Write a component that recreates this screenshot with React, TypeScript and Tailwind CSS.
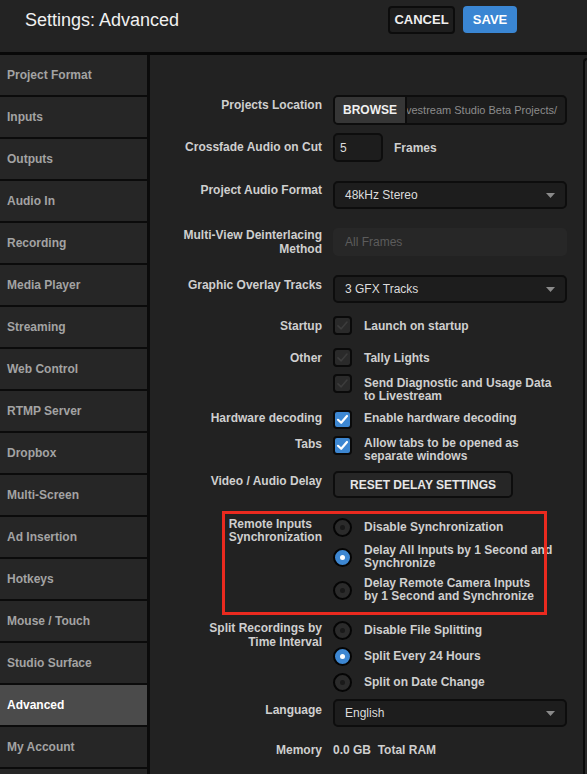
import type { ReactNode } from 'react'

const sidebarItems = [
  'Project Format',
  'Inputs',
  'Outputs',
  'Audio In',
  'Recording',
  'Media Player',
  'Streaming',
  'Web Control',
  'RTMP Server',
  'Dropbox',
  'Multi-Screen',
  'Ad Insertion',
  'Hotkeys',
  'Mouse / Touch',
  'Studio Surface',
  'Advanced',
  'My Account',
  'Support',
]

const font = { fontFamily: '"Liberation Sans", Arial, sans-serif' }

function Row({
  label,
  labelClass = '',
  className = '',
  children,
}: {
  label: ReactNode
  labelClass?: string
  className?: string
  children: ReactNode
}) {
  return (
    <div className={`flex items-start ${className}`}>
      <div className={`w-[172px] shrink-0 text-right text-[12px] font-bold leading-[14px] text-[#cfcfcf] ${labelClass}`}>
        {label}
      </div>
      <div className="ml-[11px] flex-1">{children}</div>
    </div>
  )
}

function Caret() {
  return (
    <svg width="9" height="5" viewBox="0 0 9 5" className="ml-auto mr-[10px]">
      <path d="M0 0 L9 0 L4.5 5 Z" fill="#8a8a8a" />
    </svg>
  )
}

function Select({ value }: { value: string }) {
  return (
    <div className="flex h-[28px] w-[234px] items-center rounded-[5px] border-2 border-[#0d0d0d] bg-[#1d1d1d] pl-[10px] text-[12px] text-[#dcdcdc]">
      {value}
      <Caret />
    </div>
  )
}

function Check({ checked }: { checked?: boolean }) {
  return (
    <div
      className={`flex h-[19px] w-[19px] shrink-0 items-center justify-center rounded-[4px] border-2 border-[#0a0a0a] ${
        checked ? 'bg-[#3d87d2]' : 'bg-[#2a2a2a]'
      }`}
    >
      <svg width="13" height="13" viewBox="0 0 13 13">
        <path
          d="M2 6.8 L5.2 9.8 L11 3"
          fill="none"
          stroke={checked ? '#ffffff' : '#3c3c3c'}
          strokeWidth={checked ? 2.2 : 1.6}
          strokeLinecap="round"
          strokeLinejoin="round"
        />
      </svg>
    </div>
  )
}

function CheckOption({ checked, children, textClass = 'pt-[3px]' }: { checked?: boolean; children: ReactNode; textClass?: string }) {
  return (
    <div className="flex items-start">
      <Check checked={checked} />
      <div className={`ml-[12px] text-[12px] font-bold leading-[13px] text-[#cfcfcf] ${textClass}`}>{children}</div>
    </div>
  )
}

function Radio({ on }: { on?: boolean }) {
  return (
    <div
      className={`flex h-[19px] w-[19px] shrink-0 items-center justify-center rounded-full border-[2.5px] border-[#050505] ${
        on ? 'bg-[#3d87d2]' : 'bg-[#2b2b2b]'
      }`}
    >
      <div className={`h-[5px] w-[5px] rounded-full ${on ? 'bg-white' : 'bg-[#191919]'}`} />
    </div>
  )
}

function RadioOption({ on, children }: { on?: boolean; children: ReactNode }) {
  return (
    <div className="flex items-center">
      <Radio on={on} />
      <div className="ml-[12px] text-[12px] font-bold leading-[13px] text-[#cfcfcf]">{children}</div>
    </div>
  )
}

export default function App() {
  return (
    <div className="flex h-[774px] w-[587px] flex-col overflow-hidden bg-[#222222]" style={font}>
      {/* Header */}
      <div className="flex h-[52px] shrink-0 items-start bg-[#232323]">
        <div className="ml-[25px] mt-[9px] text-[18px] leading-[22px] text-[#f0f0f0]">Settings: Advanced</div>
        <div className="ml-auto mr-[70px] mt-[6px] flex gap-[8px]">
          <button className="h-[28px] w-[67px] rounded-[4px] border-2 border-[#0c0c0c] bg-[#1e1e1e] text-[13px] font-bold text-[#efefef]">
            CANCEL
          </button>
          <button className="h-[27px] w-[54px] rounded-[4px] bg-[#3a86d3] text-[13px] font-bold text-white">SAVE</button>
        </div>
      </div>
      <div className="h-[3px] shrink-0 bg-[#080808]" />

      <div className="flex flex-1 overflow-hidden">
        {/* Sidebar */}
        <div className="w-[147px] shrink-0">
          {sidebarItems.map((item) => (
            <div
              key={item}
              className={`flex h-[42px] items-center border-b-2 border-[#0b0b0b] pb-[1px] pl-[7px] text-[12px] font-bold ${
                item === 'Advanced' ? 'bg-[#4b4b4b] text-white' : 'bg-[#262626] text-[#a3a3a3]'
              }`}
            >
              {item}
            </div>
          ))}
        </div>
        <div className="w-[3px] shrink-0 bg-[#0b0b0b]" />

        {/* Main */}
        <div className="flex flex-1 flex-col pt-[40px]">
          <Row label="Projects Location" labelClass="pt-[3px]">
            <div className="flex h-[30px] w-[234px] overflow-hidden rounded-[5px] border-2 border-[#0d0d0d] bg-[#1d1d1d]">
              <div className="flex w-[72px] shrink-0 items-center justify-center border-r-2 border-[#0d0d0d] bg-[#363636] text-[12px] font-bold text-[#f0f0f0]">
                BROWSE
              </div>
              <div className="flex min-w-0 flex-1 items-center justify-end overflow-hidden whitespace-nowrap pr-[8px] text-[11px] text-[#8c8c8c]">
                <span className="shrink-0">/Users/Livestream Studio Beta Projects/</span>
              </div>
            </div>
          </Row>

          <Row label="Crossfade Audio on Cut" labelClass="pt-[7px]" className="mt-[8px]">
            <div className="flex items-center">
              <div className="flex h-[29px] w-[50px] items-center rounded-[5px] border-2 border-[#0d0d0d] bg-[#1d1d1d] pl-[5px] text-[12px] text-[#dcdcdc]">
                5
              </div>
              <div className="ml-[11px] text-[12px] font-bold text-[#cfcfcf]">Frames</div>
            </div>
          </Row>

          <Row label="Project Audio Format" labelClass="pt-[2px]" className="mt-[19px]">
            <Select value="48kHz Stereo" />
          </Row>

          <Row
            label={
              <>
                Multi-View Deinterlacing
                <br />
                Method
              </>
            }
            labelClass="leading-[13px]"
            className="mt-[19px]"
          >
            <div className="flex h-[28px] w-[234px] items-center rounded-[5px] bg-[#272727] pl-[12px] text-[12px] text-[#5c5c5c]">
              All Frames
            </div>
          </Row>

          <Row label="Graphic Overlay Tracks" labelClass="pt-[3px]" className="mt-[19px]">
            <Select value="3 GFX Tracks" />
          </Row>

          <Row label="Startup" labelClass="pt-[3px]" className="mt-[13px]">
            <CheckOption textClass="pt-[4px]">Launch on startup</CheckOption>
          </Row>

          <Row label="Other" labelClass="pt-[3px]" className="mt-[13px]">
            <CheckOption textClass="pt-[4px]">Tally Lights</CheckOption>
          </Row>

          <Row label="" className="mt-[7px]">
            <CheckOption textClass="pt-[3px]">
              Send Diagnostic and Usage Data
              <br />
              to Livestream
            </CheckOption>
          </Row>

          <Row label="Hardware decoding" labelClass="pt-[1px]" className="mt-[7px]">
            <CheckOption checked textClass="pt-[2px]">
              Enable hardware decoding
            </CheckOption>
          </Row>

          <Row label="Tabs" labelClass="pt-[1px]" className="mt-[7px]">
            <CheckOption checked textClass="pt-[1px]">
              Allow tabs to be opened as
              <br />
              separate windows
            </CheckOption>
          </Row>

          <Row label="Video / Audio Delay" labelClass="pt-[3px]" className="mt-[8px]">
            <button className="h-[27px] w-[180px] rounded-[5px] border-2 border-[#0d0d0d] bg-[#262626] text-[12px] font-bold text-[#e6e6e6]">
              RESET DELAY SETTINGS
            </button>
          </Row>

          <div className="relative mt-[20px]">
            <Row
              label={
                <span className="inline-block text-left leading-[13px]">
                  Remote Inputs
                  <br />
                  Synchronization
                </span>
              }
            >
              <div className="flex flex-col gap-[7px]">
                <RadioOption>Disable Synchronization</RadioOption>
                <RadioOption on>
                  Delay All Inputs by 1 Second and
                  <br />
                  Synchronize
                </RadioOption>
                <RadioOption>
                  Delay Remote Camera Inputs
                  <br />
                  by 1 Second and Synchronize
                </RadioOption>
              </div>
            </Row>
            <div className="pointer-events-none absolute left-[72px] top-[-7px] h-[104px] w-[325px] border-[3px] border-[#ea2a1f]" />
          </div>

          <Row
            label={
              <>
                Split Recordings by
                <br />
                Time Interval
              </>
            }
            labelClass="leading-[13px]"
            className="mt-[18px]"
          >
            <div className="flex flex-col gap-[7px]">
              <RadioOption>Disable File Splitting</RadioOption>
              <RadioOption on>Split Every 24 Hours</RadioOption>
              <RadioOption>Split on Date Change</RadioOption>
            </div>
          </Row>

          <Row label="Language" labelClass="pt-[4px]" className="mt-[7px]">
            <Select value="English" />
          </Row>

          <Row label="Memory" className="mt-[16px]">
            <div className="text-[12px] font-bold leading-[14px] text-[#cfcfcf]">0.0 GB&nbsp;&nbsp;Total RAM</div>
          </Row>
        </div>

        {/* scroll track */}
        <div className="mt-[3px] w-[4px] shrink-0 rounded-tl-[5px] border-l-2 border-t-2 border-[#0b0b0b] bg-[#2a2a2a]" />
      </div>
    </div>
  )
}
